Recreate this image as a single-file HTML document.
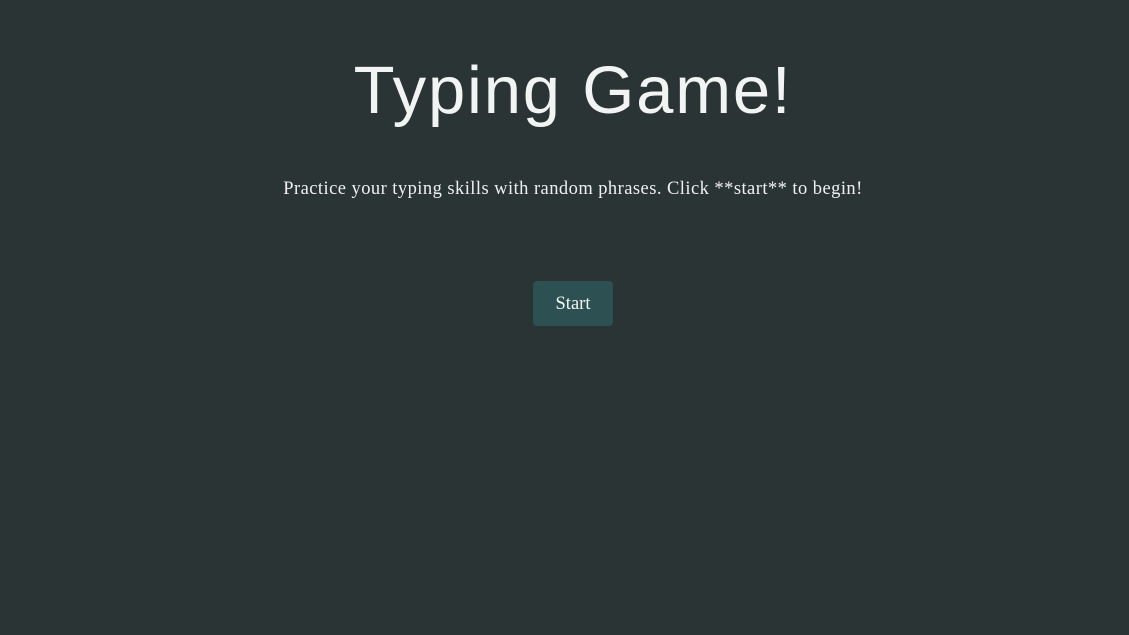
<!DOCTYPE html>
<html><head><style>
html,body{margin:0;padding:0;width:1129px;height:635px;background:#2b3434;overflow:hidden}
h1{position:absolute;left:0;width:1146px;top:51px;margin:0;text-align:center;font-family:"Liberation Sans",sans-serif;font-weight:normal;font-size:67px;line-height:80px;color:#f2f4f4;letter-spacing:1.8px}
p{position:absolute;left:0;width:1146px;top:177px;margin:0;text-align:center;font-family:"Liberation Serif",serif;font-size:18.5px;line-height:24px;color:#eef0f0;letter-spacing:0.45px}
.btn{position:absolute;left:533px;top:281px;width:80px;height:45px;background:#2d5152;border-radius:4px;color:#f2f4f4;font-family:"Liberation Serif",serif;font-size:18.5px;line-height:46px;text-align:center}
</style></head><body>
<h1>Typing Game!</h1>
<p>Practice your typing skills with random phrases. Click **start** to begin!</p>
<div class="btn">Start</div>
</body></html>
